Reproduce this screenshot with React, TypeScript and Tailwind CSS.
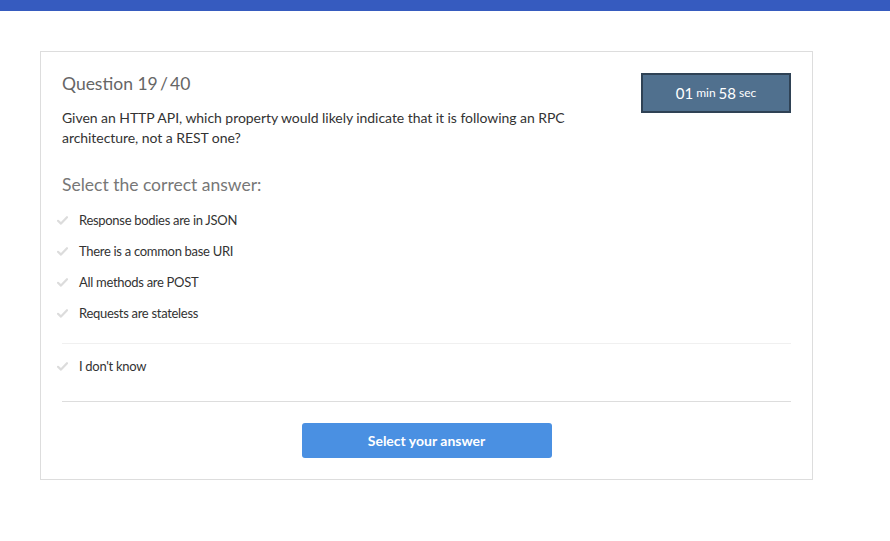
import React from 'react';

const Check = () => (
  <svg width="11" height="9" viewBox="0 0 11 9" className="shrink-0">
    <path d="M1 4.8 L4 7.6 L10 1.2" fill="none" stroke="#dcdcdc" strokeWidth="2.2" strokeLinecap="round" strokeLinejoin="round" />
  </svg>
);

const Option = ({ label }: { label: string }) => (
  <div className="flex h-[31px] items-center">
    <div className="flex w-[22px]">
      <Check />
    </div>
    <span className="text-[13px] text-[#333] tracking-[-0.3px]">{label}</span>
  </div>
);

export default function App() {
  const answers = [
    'Response bodies are in JSON',
    'There is a common base URI',
    'All methods are POST',
    'Requests are stateless',
  ];

  return (
    <div className="min-h-screen bg-white" style={{ fontFamily: 'Lato, "Open Sans", sans-serif' }}>
      <div className="h-[11px] bg-[#365bbf]" />
      <div className="pl-[40px] pt-[40px]">
        <div className="w-[773px] border border-[#dddddd] px-[21px] pt-[20px] pb-[21px]">
          <div className="flex justify-between">
            <div className="max-w-[540px]">
              <h1 className="text-[17.5px] leading-[24px] text-[#666]">Question 19{'\u2009'}/{'\u2009'}40</h1>
              <p className="mt-[12px] text-[14px] leading-[20px] text-[#333] tracking-[-0.05px]">
                Given an HTTP API, which property would likely indicate that it is following an RPC architecture, not a REST one?
              </p>
            </div>
            <div className="mt-[1px] flex h-[40px] w-[150px] items-center justify-center border-2 border-[#2f4255] bg-[#50708e] text-white">
              <span className="text-[15px]">01</span>
              <span className="ml-[3px] text-[12px]">min</span>
              <span className="ml-[3px] text-[15px]">58</span>
              <span className="ml-[3px] text-[12px]">sec</span>
            </div>
          </div>

          <h2 className="mt-[25px] text-[17.5px] leading-[24px] text-[#777]">Select the correct answer:</h2>

          <div className="mt-[8px] -ml-[5px]">
            {answers.map(a => (
              <Option key={a} label={a} />
            ))}
          </div>

          <div className="mt-[14px] border-t border-[#f0f0f0]" />

          <div className="mt-[7px] -ml-[5px]">
            <Option label="I don't know" />
          </div>

          <div className="mt-[19px] border-t border-[#dddddd]" />

          <div className="mt-[21px] flex justify-center">
            <button className="h-[35px] w-[250px] rounded-[3px] bg-[#4a90e2] text-[14px] font-bold text-white">
              Select your answer
            </button>
          </div>
        </div>
      </div>
    </div>
  );
}
